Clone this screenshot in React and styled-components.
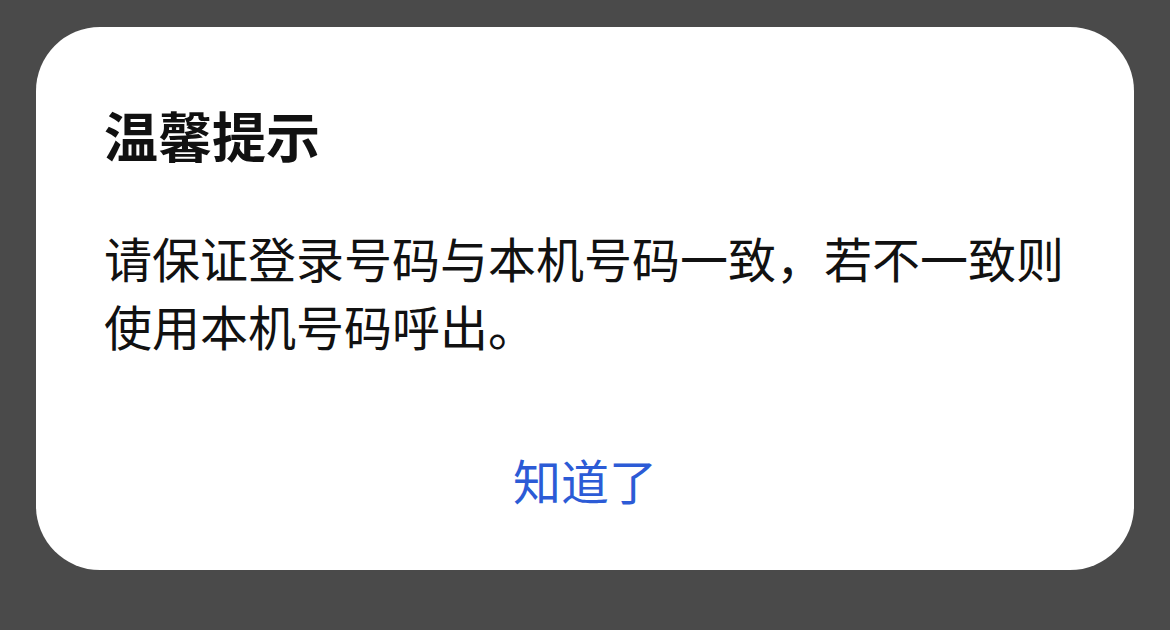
import React from "react";
import styled, { createGlobalStyle } from "styled-components";

const Global = createGlobalStyle`
  html, body {
    margin: 0;
    padding: 0;
    background: #4a4a4a;
  }
  body {
    font-family: "Noto Sans CJK SC", "Noto Sans", sans-serif;
  }
`;

const Screen = styled.div`
  width: 1170px;
  height: 630px;
  box-sizing: border-box;
  padding: 27px 36px 60px 36px;
  display: flex;
`;

const Dialog = styled.div`
  flex: 1;
  background: #ffffff;
  border-radius: 64px;
  box-sizing: border-box;
  padding: 74px 60px 57px 68px;
  display: flex;
  flex-direction: column;
`;

const Title = styled.h1`
  margin: 0;
  font-size: 54px;
  line-height: 68px;
  font-weight: 700;
  color: #111111;
`;

const Message = styled.p`
  margin: 54px 0 0 0;
  font-size: 48px;
  line-height: 68px;
  font-weight: 400;
  color: #111111;
`;

const Actions = styled.div`
  margin-top: auto;
  display: flex;
  justify-content: center;
  margin-right: 8px;
`;

const ActionButton = styled.button`
  border: none;
  background: transparent;
  padding: 0;
  font-family: inherit;
  font-size: 48px;
  line-height: 68px;
  color: #2c5bd6;
  cursor: pointer;
`;

export default function App() {
  return (
    <>
      <Global />
      <Screen>
        <Dialog>
          <Title>温馨提示</Title>
          <Message>请保证登录号码与本机号码一致，若不一致则使用本机号码呼出。</Message>
          <Actions>
            <ActionButton>知道了</ActionButton>
          </Actions>
        </Dialog>
      </Screen>
    </>
  );
}
